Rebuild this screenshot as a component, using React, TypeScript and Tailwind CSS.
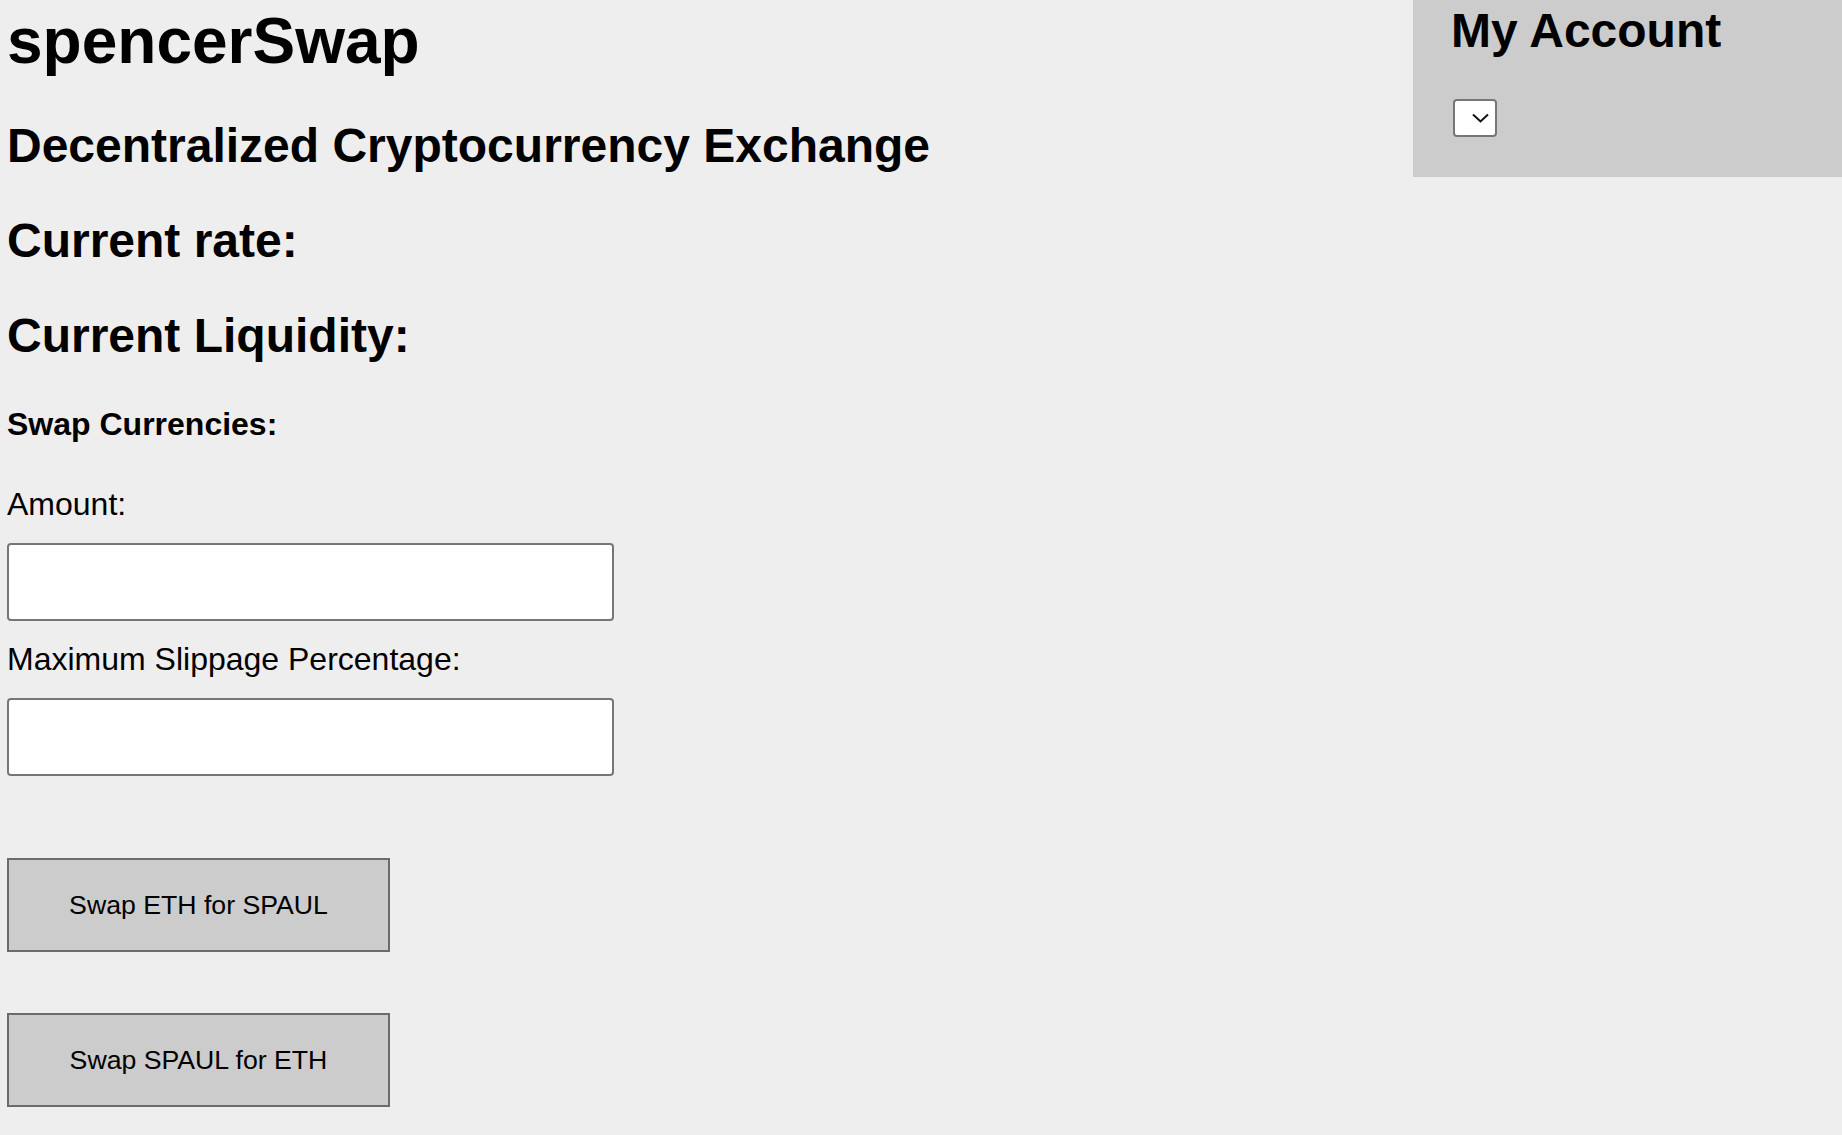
import React from 'react';

function Field({ label, top }: { label: string; top: string }) {
  return (
    <>
      <p className={`${top} text-[32px] leading-[32px] text-black`}>{label}</p>
      <input
        type="text"
        className="block mt-[23px] w-[607px] h-[78px] bg-white border-2 border-[#767676] rounded-[4px] px-2 text-[24px] outline-none"
      />
    </>
  );
}

function SwapButton({ label, top }: { label: string; top: string }) {
  return (
    <button
      className={`${top} block w-[383px] h-[94px] bg-[#cccccc] border-2 border-[#6b6b6b] text-[26.67px] leading-[26px] text-black`}
    >
      {label}
    </button>
  );
}

export default function App() {
  return (
    <div className="min-h-screen w-full bg-[#eeeeee] flex font-['Liberation_Sans',Arial,sans-serif] text-black">
      <div className="flex-1 pl-[7px]">
        <h1 className="mt-[9px] text-[64px] leading-[64px] font-bold">spencerSwap</h1>
        <h2 className="mt-[49px] text-[48px] leading-[48px] font-bold">Decentralized Cryptocurrency Exchange</h2>
        <h2 className="mt-[47px] text-[48px] leading-[48px] font-bold">Current rate:</h2>
        <h2 className="mt-[47px] text-[48px] leading-[48px] font-bold">Current Liquidity:</h2>
        <h4 className="mt-[48px] text-[32px] leading-[32px] font-bold">Swap Currencies:</h4>

        <Field label="Amount:" top="mt-[48px]" />
        <Field label="Maximum Slippage Percentage:" top="mt-[22px]" />

        <SwapButton label="Swap ETH for SPAUL" top="mt-[82px]" />
        <SwapButton label="Swap SPAUL for ETH" top="mt-[61px]" />
      </div>

      <div className="w-[429px] h-[177px] bg-[#cccccc] pl-[38px] pt-[7px] shrink-0">
        <h2 className="text-[48px] leading-[48px] font-bold">My Account</h2>
        <div className="mt-[44px] ml-[2px] w-[44px] h-[38px] bg-white border-2 border-[#767676] rounded-[4px] flex items-center justify-end pr-[6px]">
          <svg width="17" height="10" viewBox="0 0 17 10" fill="none">
            <path d="M1 1.5 L8.5 8.5 L16 1.5" stroke="#111" strokeWidth="2" />
          </svg>
        </div>
      </div>
    </div>
  );
}
